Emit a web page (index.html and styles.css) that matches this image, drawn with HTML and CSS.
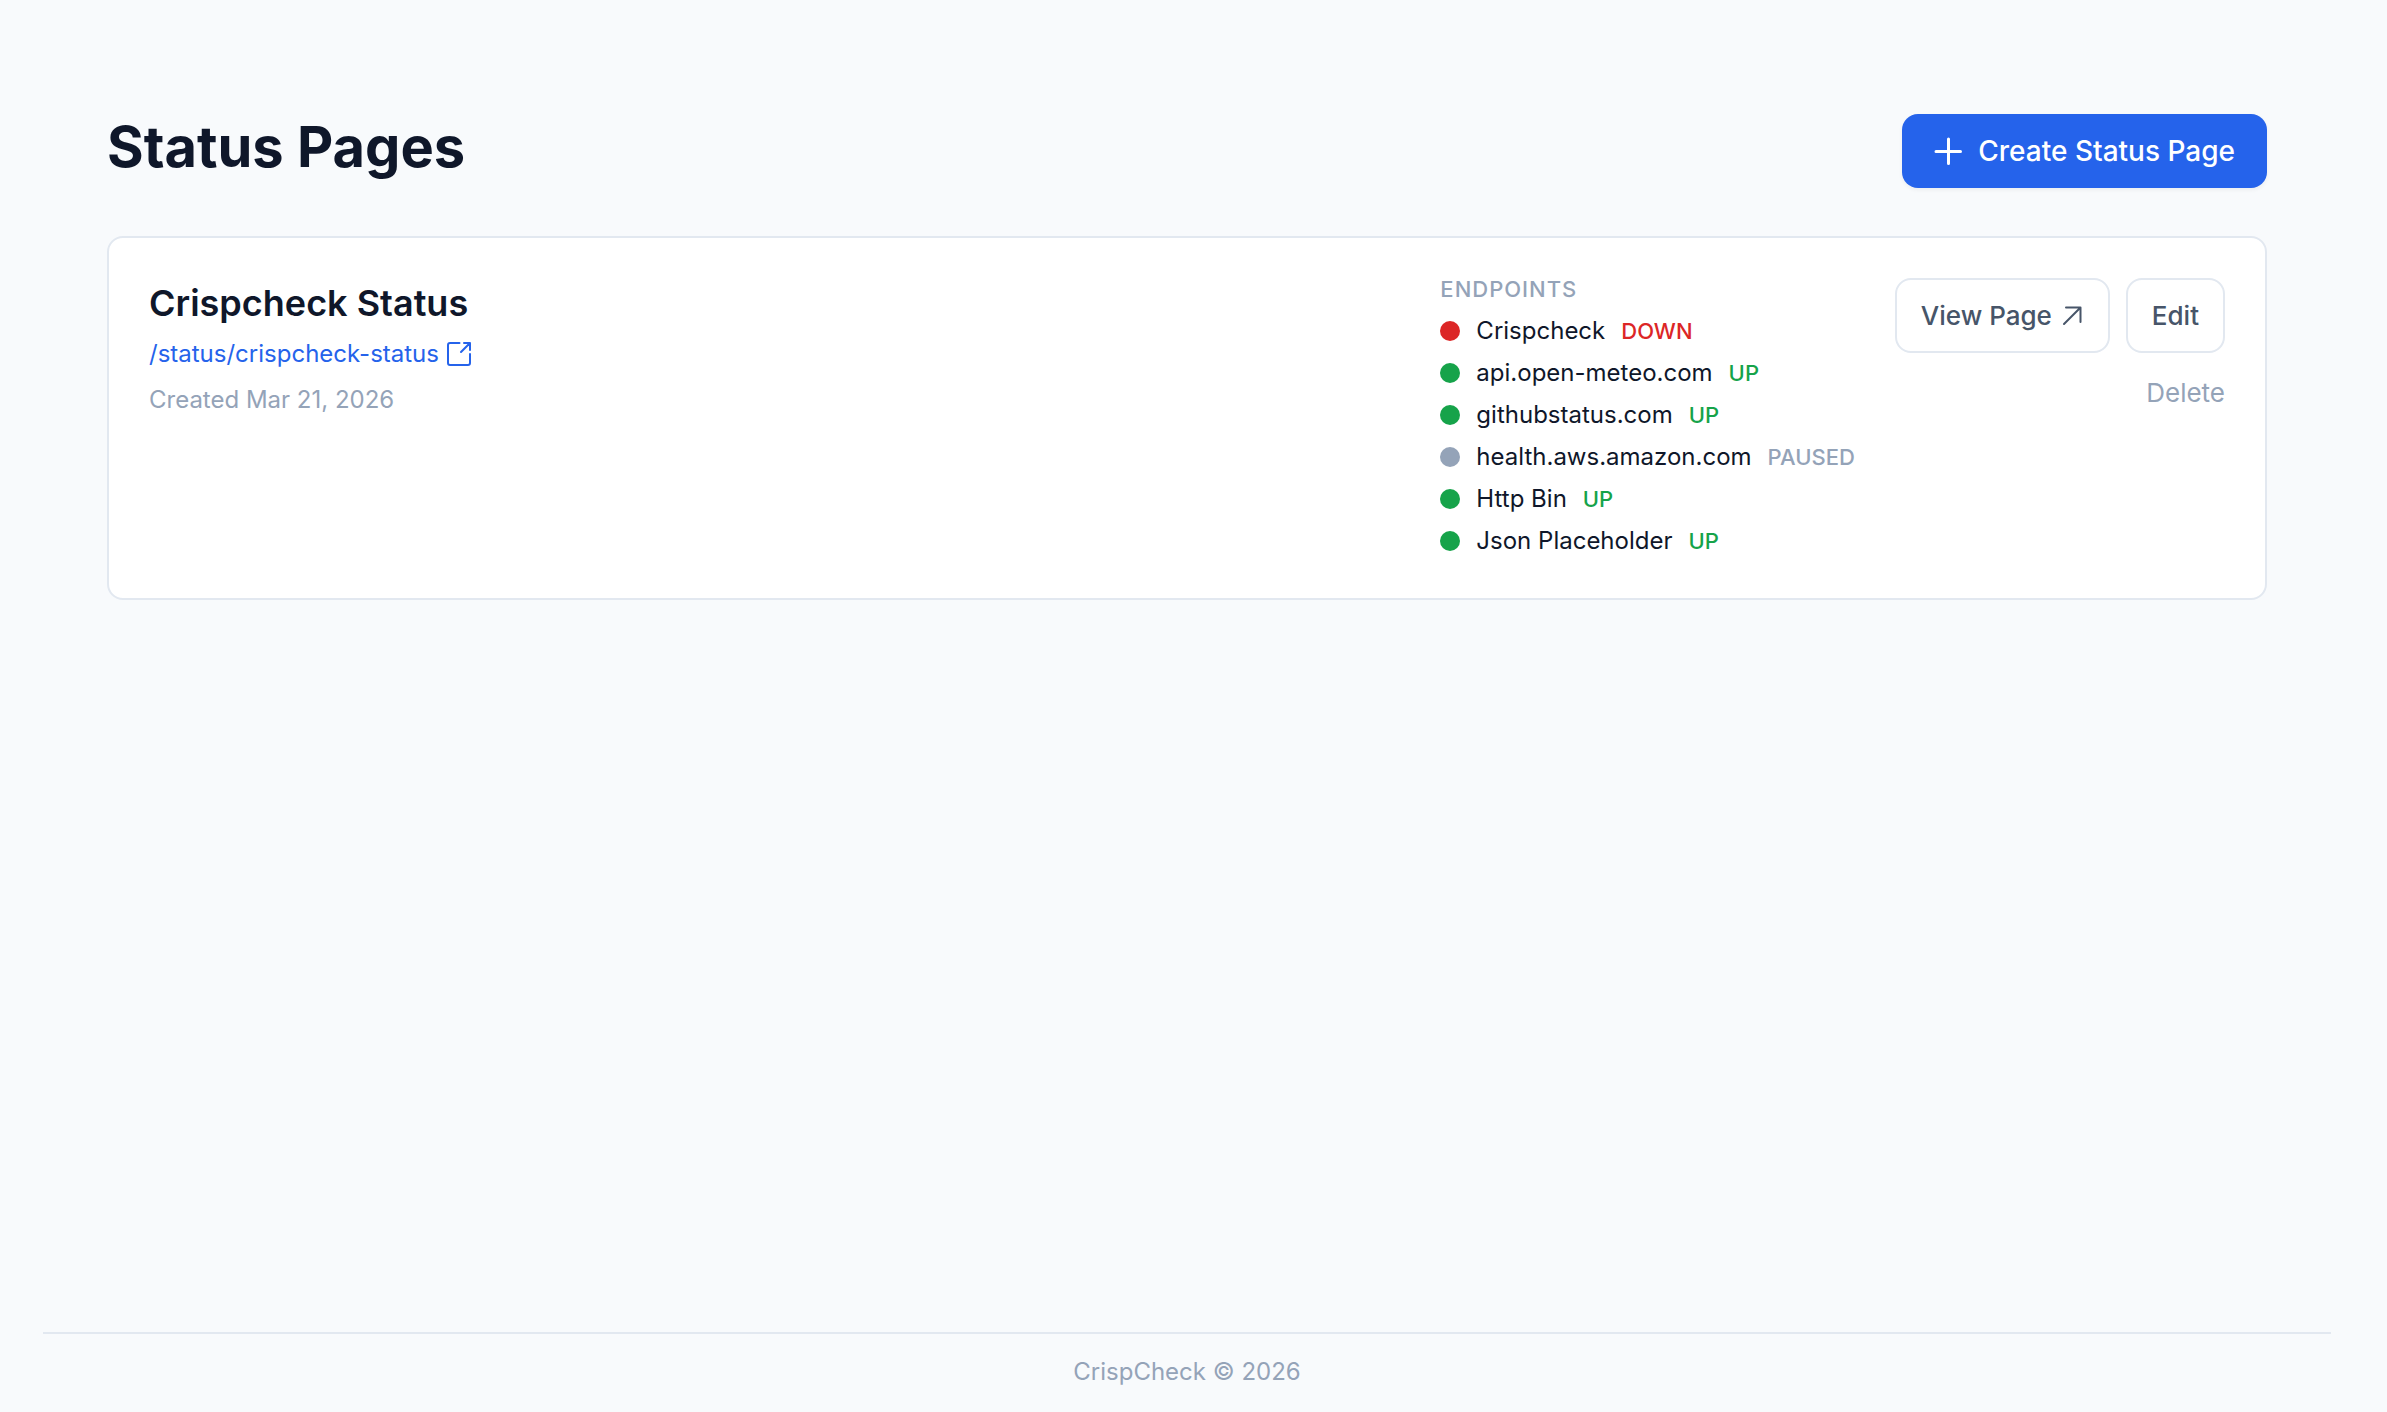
FILE: index.html
```html
<!DOCTYPE html>
<html lang="en">
  <head>
    <meta charset="UTF-8" />
    <meta name="viewport" content="width=device-width, initial-scale=1.0" />
    <title>Status Pages</title>
    <link rel="stylesheet" href="styles.css">
  </head>
  <body>
    <main class="container">
      <div class="page-header">
        <h1>Status Pages</h1>
        <button type="button" class="btn btn-primary">
          <svg class="icon-plus" viewBox="0 0 28 28" aria-hidden="true">
            <path d="M14.500 2v24.500M2 14.500h24.500" />
          </svg>
          Create Status Page
        </button>
      </div>

      <div class="card">
        <div class="info">
          <h2>Crispcheck Status</h2>
          <a class="info-link" href="/status/crispcheck-status">
            /status/crispcheck-status
            <svg class="icon-external" viewBox="0 0 24 24" aria-hidden="true">
              <path d="M12.500 1H3a2 2 0 0 0-2 2v18a2 2 0 0 0 2 2h18a2 2 0 0 0 2-2V12" />
              <path d="M17 1h6v7M23 1L14 10" />
            </svg>
          </a>
          <p>Created Mar 21, 2026</p>
        </div>

        <div class="endpoints">
          <h3>Endpoints</h3>
          <ul>
            <li class="down"><span class="dot"></span>Crispcheck <small>DOWN</small></li>
            <li class="up"><span class="dot"></span>api.open-meteo.com <small>UP</small></li>
            <li class="up"><span class="dot"></span>githubstatus.com <small>UP</small></li>
            <li class="paused"><span class="dot"></span>health.aws.amazon.com <small>PAUSED</small></li>
            <li class="up"><span class="dot"></span>Http Bin <small>UP</small></li>
            <li class="up"><span class="dot"></span>Json Placeholder <small>UP</small></li>
          </ul>
        </div>

        <div class="actions">
          <div class="actions-row">
            <a class="btn btn-outline" href="/status/crispcheck-status">
              View Page
              <svg class="icon-arrow" viewBox="0 0 22 22" aria-hidden="true">
                <path d="M2 19L18.500 2.500M4 2.500h14.500V17" />
              </svg>
            </a>
            <button type="button" class="btn btn-outline">Edit</button>
          </div>
          <button type="button" class="btn-delete">Delete</button>
        </div>
      </div>
    </main>

    <footer class="footer">CrispCheck © 2026</footer>
  </body>
</html>
```
FILE: styles.css
```css
* {
  margin: 0;
  padding: 0;
  box-sizing: border-box;
}

body {
  display: flex;
  flex-direction: column;
  min-height: 100vh;
  padding: 0 56px 0 43px;
  background-color: #f8fafc;
  color: #0f172a;
  font-family: Inter, "Liberation Sans", sans-serif;
  font-size: 24px;
  line-height: 36px;
}

button {
  font: inherit;
  cursor: pointer;
}

a {
  text-decoration: none;
}

svg {
  flex-shrink: 0;
  overflow: visible;
  fill: none;
  stroke: currentColor;
  stroke-width: 2;
  stroke-linecap: round;
  stroke-linejoin: round;
}

.container {
  flex: 1;
  padding: 114px 64px 0;
}

.page-header {
  display: flex;
  justify-content: space-between;
  align-items: flex-start;
  margin-bottom: 48px;
}

h1 {
  font-size: 56px;
  font-weight: 700;
  line-height: 66px;
}

.btn {
  display: inline-flex;
  align-items: center;
  border-radius: 16px;
  font-weight: 500;
}

.btn-primary {
  gap: 16px;
  padding: 16px 32px;
  border: none;
  background-color: #2563eb;
  color: #fff;
  font-size: 28px;
  line-height: 42px;
  box-shadow: 0 2px 4px rgba(0, 0, 0, 0.05);
}

.icon-plus {
  width: 28px;
  height: 28px;
  stroke-width: 3;
}

.card {
  display: flex;
  align-items: flex-start;
  gap: 40px;
  padding: 40px;
  background-color: #fff;
  border: 2px solid #e2e8f0;
  border-radius: 16px;
}

.info {
  flex: 1;
}

h2 {
  margin-bottom: 8px;
  font-size: 36px;
  font-weight: 600;
  line-height: 50px;
}

.info-link {
  display: flex;
  align-items: center;
  gap: 8px;
  margin-bottom: 10px;
  color: #2563eb;
}

.icon-external {
  width: 24px;
  height: 24px;
}

.info p {
  color: #94a3b8;
}

.endpoints h3 {
  margin-bottom: 14px;
  color: #94a3b8;
  font-size: 22px;
  font-weight: 500;
  line-height: 22px;
  letter-spacing: 1px;
  text-transform: uppercase;
}

.endpoints ul {
  display: flex;
  flex-direction: column;
  gap: 8px;
  list-style: none;
}

.endpoints li {
  display: flex;
  align-items: center;
  gap: 16px;
  line-height: 34px;
}

.dot {
  width: 20px;
  height: 20px;
  border-radius: 50%;
}

small {
  font-size: 22px;
  font-weight: 500;
}

.up small {
  color: #16a34a;
}

.up .dot {
  background-color: #16a34a;
}

.down small {
  color: #dc2626;
}

.down .dot {
  background-color: #dc2626;
}

.paused small {
  color: #94a3b8;
}

.paused .dot {
  background-color: #94a3b8;
}

.actions {
  display: flex;
  flex-direction: column;
  align-items: flex-end;
  gap: 20px;
}

.actions-row {
  display: flex;
  gap: 16px;
}

.btn-outline {
  gap: 10px;
  padding: 16px 24px;
  background-color: #fff;
  border: 2px solid #e2e8f0;
  color: #475569;
  font-size: 26px;
  line-height: 39px;
}

.icon-arrow {
  width: 22px;
  height: 22px;
}

.btn-delete {
  background: none;
  border: none;
  color: #94a3b8;
  font-size: 26px;
  line-height: 39px;
}

.footer {
  padding: 20px 0 22px;
  border-top: 2px solid #e2e8f0;
  color: #94a3b8;
  text-align: center;
}
```
